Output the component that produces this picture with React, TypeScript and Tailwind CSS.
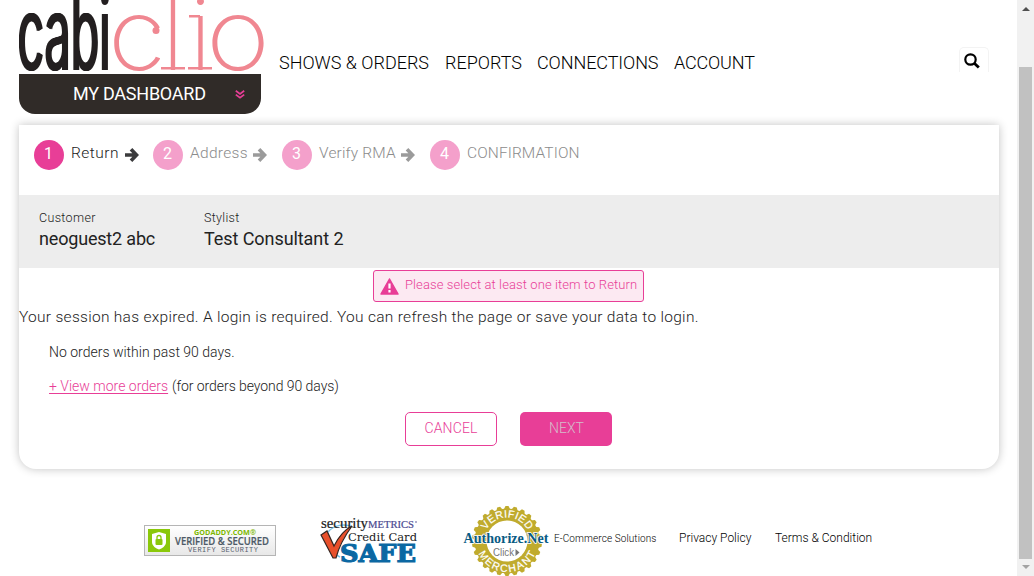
function Arrow({ className }: { className: string }) {
  return (
    <svg viewBox="0 0 14 14" className={`h-[14px] w-[14px] fill-none ${className}`}>
      <path d="M0 7H10.500M6 1.300L11.500 7L6 12.700" stroke="currentColor" strokeWidth="3.600" />
    </svg>
  );
}

function Logo() {
  return (
    <svg viewBox="0 0 250 74" className="block h-[74px] w-[250px] overflow-hidden">
      <text x="-2.500" y="69.500" textLength="93" lengthAdjust="spacingAndGlyphs" fill="#231f20" fontFamily="Inter, sans-serif" fontWeight="400" fontSize="103" className="[filter:drop-shadow(1.2px_0_0_#231f20)_drop-shadow(1px_0_0_#231f20)]">
        cabi
      </text>
      <g fill="#f08791" fontFamily="Inter, sans-serif" fontWeight="200" fontSize="99">
        <text x="89" y="69.500" textLength="58" lengthAdjust="spacingAndGlyphs">c</text>
        <text x="143" y="69.500" textLength="22" lengthAdjust="spacingAndGlyphs">l</text>
        <text x="170.500" y="69.500" textLength="22" lengthAdjust="spacingAndGlyphs">i</text>
        <text x="187" y="69.500" textLength="64" lengthAdjust="spacingAndGlyphs">o</text>
        <rect x="142" y="67" width="24" height="2.500" />
        <rect x="169" y="67" width="24" height="2.500" />
        <rect x="170" y="15" width="11" height="2.500" />
        <circle cx="137" cy="30.500" r="3.500" />
      </g>
    </svg>
  );
}

function Step({ n, label, active, className, labelClass, arrow = true }: { n: number; label: string; active?: boolean; className: string; labelClass: string; arrow?: boolean }) {
  return (
    <div className={`flex shrink-0 items-start ${className}`}>
      <span className={`mt-[15px] flex h-[30px] w-[30px] shrink-0 justify-center rounded-full text-[16px] leading-[27px] font-normal text-white ${active ? "bg-[#e83e97]" : "bg-[#f4a0cb]"}`}>
        <span className="-ml-px">{n}</span>
      </span>
      <span className={`mt-[18px] ml-[7px] text-[15.5px] leading-5 ${labelClass} ${active ? "text-[#222]" : "text-[#8c8c8c]"}`}>{label}</span>
      {arrow && <Arrow className={`mt-[23px] ml-auto ${active ? "text-[#3b3b3d]" : "text-[#9b9b9b]"}`} />}
    </div>
  );
}

function GoDaddySeal() {
  return (
    <div className="flex h-[31px] w-[132px] items-center border border-[#b5b5b5] bg-linear-to-b from-white to-[#e8e8e8] pl-[3px]">
      <svg viewBox="0 0 22 23" className="h-[23px] w-[22px]">
        <rect width="22" height="23" fill="#8ac80a" />
        <path d="M11 3L18 5V13C18 17 14 19.500 11 20.500C8 19.500 4 17 4 13V5Z" fill="#fff" />
        <rect x="7.500" y="10" width="7" height="6" rx="1" fill="#8ac80a" />
        <path d="M9 10V8.500a2 2 0 0 1 4 0V10" fill="none" stroke="#8ac80a" strokeWidth="1.300" />
      </svg>
      <svg viewBox="0 0 104 29" className="h-[29px] w-[104px]">
        <text x="24" y="9.200" textLength="62" lengthAdjust="spacingAndGlyphs" fontFamily="Open Sans" fontWeight="700" fontSize="7" fill="#7cb800">GODADDY.COM®</text>
        <text x="5" y="19" textLength="94" lengthAdjust="spacingAndGlyphs" fontFamily="Open Sans" fontWeight="600" fontSize="11" fill="#4d5a66" stroke="#4d5a66" strokeWidth=".2">VERIFIED &amp; SECURED</text>
        <text x="18" y="26" textLength="70" fontFamily="Liberation Mono" fontSize="7" fill="#56606c">VERIFY SECURITY</text>
      </svg>
    </div>
  );
}

function SecurityMetrics() {
  return (
    <svg viewBox="0 0 100 52" className="h-[52px] w-[100px]">
      <path d="M8 17C14 10 24 8 33 12M5 22C5 31 10 37 20 42" fill="none" stroke="#7cc4e8" strokeWidth="1.500" />
      <g fontFamily="Liberation Serif">
        <text x="1" y="13" textLength="47" lengthAdjust="spacingAndGlyphs" fontSize="15" fill="#222" stroke="#222" strokeWidth=".2">security</text>
        <text x="48" y="13" textLength="46" lengthAdjust="spacingAndGlyphs" fontSize="9.500" fill="#4b4a91" stroke="#4b4a91" strokeWidth=".2">METRICS</text>
      </g>
      <circle cx="96" cy="7" r=".8" fill="#4b4a91" />
      <path d="M1 20L7 16L14 31C19 21 24 15 32 11C24 22 19 31 16 43H13Z" fill="#e8502b" stroke="#342520" strokeWidth="1.200" />
      <text x="28" y="25.500" textLength="69" lengthAdjust="spacingAndGlyphs" fontFamily="DejaVu Serif" fontSize="11.500" fill="#222" stroke="#fff" strokeWidth="1.500" paintOrder="stroke">Credit Card</text>
      <text x="20" y="47" textLength="76" lengthAdjust="spacingAndGlyphs" fontFamily="DejaVu Serif" fontWeight="700" fontSize="24" fill="#0b68a3" stroke="#0b68a3" strokeWidth="1.200">SAFE</text>
    </svg>
  );
}

const teeth = Array.from({ length: 26 }, (_, i) => (i * 360) / 26);

function AuthorizeSeal() {
  return (
    <svg viewBox="0 0 88 72" className="h-[72px] w-[88px]">
      <g fill="#c0ab2d">
        <circle cx="44" cy="37" r="32.500" />
        {teeth.map((a) => (
          <path key={a} d="M40.500 6L42.500 2H45.500L47.500 6Z" transform={`rotate(${a} 44 37)`} />
        ))}
      </g>
      <circle cx="44" cy="37" r="20.500" fill="#fff" />
      <path id="sealTop" d="M20.500 37A23.500 23.500 0 0 1 67.500 37" fill="none" />
      <path id="sealBottom" d="M13 37A31 31 0 0 0 75 37" fill="none" />
      <g fontFamily="Liberation Sans" fontSize="10.500" fill="#fff" stroke="#fff" strokeWidth=".2" textAnchor="middle">
        <text><textPath href="#sealTop" startOffset="50%" textLength="51">VERIFIED</textPath></text>
        <text><textPath href="#sealBottom" startOffset="50%" textLength="72">MERCHANT</textPath></text>
      </g>
      <text x="0.500" y="38.500" textLength="85" lengthAdjust="spacingAndGlyphs" fontFamily="Liberation Serif" fontWeight="700" fontSize="15.500" fill="#085b84" stroke="#fff" strokeWidth="1.600" paintOrder="stroke">Authorize.Net</text>
      <text x="30" y="52" textLength="21" lengthAdjust="spacingAndGlyphs" fontFamily="Liberation Sans" fontSize="10" fill="#777">Click</text>
      <path d="M52.500 45V52L56.500 48.500Z" fill="#777" />
    </svg>
  );
}

export default function App() {
  return (
    <div className="flex h-[576px] w-[1034px] overflow-hidden bg-white font-['Roboto',sans-serif] font-light text-[#222]">
      <main className="flex w-[1017px] shrink-0 flex-col overflow-hidden pl-[19px]">
        <header className="flex h-[125px] shrink-0">
          <div className="w-[260px] shrink-0">
            <Logo />
            <div className="flex h-10 w-[242px] items-start rounded-b-[16px] bg-[#302b28] pt-[9px] pl-[54px] text-[18px] leading-[22px] font-normal tracking-[-0.25px] text-white">
              <span className="w-[162px] whitespace-nowrap">MY DASHBOARD</span>
              <svg viewBox="0 0 10 9" className="mt-[7px] h-[9px] w-[10px] fill-none stroke-[#e83e97] stroke-[1.7]">
                <path d="M.8 .8L5 4L9.200 .8M.8 4.600L5 7.800L9.200 4.600" />
              </svg>
            </div>
          </div>
          <nav className="flex pt-[51px] text-[18px] leading-6 whitespace-nowrap text-black">
            <a className="w-[166px]">SHOWS &amp; ORDERS</a>
            <a className="w-[92px]">REPORTS</a>
            <a className="w-[137px] tracking-[-0.08px]">CONNECTIONS</a>
            <a className="w-[85px] tracking-[-0.15px]">ACCOUNT</a>
          </nav>
          <div className="mt-[47px] ml-[200px] h-[25px] w-[30px] rounded-t-[5px] border border-b-0 border-[#f3f3f3] pt-[5px] pl-[4px]">
            <svg viewBox="0 0 16 16" className="h-4 w-4 fill-none stroke-black stroke-[2.2]">
              <circle cx="6.500" cy="6.500" r="5.200" />
              <path d="M10.300 10.300L14.800 14.600" strokeWidth="2.800" />
            </svg>
          </div>
        </header>

        <section className="flex h-[344px] w-[980px] shrink-0 flex-col rounded-b-[17px] bg-white shadow-[0_0_10px_rgba(0,0,0,0.24)]">
          <div className="flex h-[70px] shrink-0 pl-[15px] whitespace-nowrap">
            <Step n={1} label="Return" active className="mr-[14px] w-[105px]" labelClass="tracking-[0.5px]" />
            <Step n={2} label="Address" className="mr-[15px] w-[114px]" labelClass="tracking-[0.3px]" />
            <Step n={3} label="Verify RMA" className="mr-[15px] w-[133px]" labelClass="tracking-[0.15px]" />
            <Step n={4} label="CONFIRMATION" arrow={false} className="w-[160px]" labelClass="tracking-[0.1px]" />
          </div>
          <div className="flex h-[73px] shrink-0 bg-[#ededed] pt-[15px] pl-5 whitespace-nowrap">
            <div className="w-[165px]">
              <div className="text-[12.500px] leading-4 tracking-[0.35px]">Customer</div>
              <div className="mt-px text-[18px] leading-6 font-normal tracking-[-0.18px]">neoguest2 abc</div>
            </div>
            <div>
              <div className="text-[12.500px] leading-4 tracking-[0.3px]">Stylist</div>
              <div className="mt-px text-[18px] leading-6 font-normal tracking-[-0.07px]">Test Consultant 2</div>
            </div>
          </div>
          <div className="mt-[2px] ml-[354px] flex h-8 w-[271px] shrink-0 rounded-[3px] border border-[#e83e97] bg-[#fce9f2] pl-[6px] whitespace-nowrap text-[#e83e97]">
            <svg viewBox="0 0 19 17" className="mt-[7px] h-[17px] w-[19px]">
              <path d="M9.500 1L18 16H1Z" fill="currentColor" stroke="currentColor" strokeWidth="1.500" strokeLinejoin="round" />
              <path d="M9.500 5.500V10.500M9.500 12V14.500" stroke="#fff" strokeWidth="2.200" />
            </svg>
            <span className="ml-[6px] text-[13px] leading-[28px] tracking-[0.1px]">Please select at least one item to Return</span>
          </div>
          <p className="mt-[5px] text-[15.500px] leading-5 tracking-[0.29px] whitespace-nowrap">Your session has expired. A login is required. You can refresh the page or save your data to login.</p>
          <p className="mt-[15px] ml-[30px] text-[14px] leading-5 whitespace-nowrap">No orders within past 90 days.</p>
          <div className="mt-[14px] ml-[30px] flex text-[14px] leading-5 whitespace-nowrap">
            <a className="w-[123px] text-[#e83e97] underline underline-offset-2">+ View more orders</a>
            <span className="tracking-[-0.06px]">(for orders beyond 90 days)</span>
          </div>
          <div className="mt-4 ml-[386px] flex gap-[23px] text-[14px] leading-[30px]">
            <button className="h-[34px] w-[92px] rounded-[5px] border border-[#e83e97] pb-[2px] tracking-[0.15px] text-[#e83e97]">CANCEL</button>
            <button className="h-[34px] w-[92px] rounded-[5px] bg-[#e83e97] pb-[2px] pl-px text-[#d5bcca]">NEXT</button>
          </div>
        </section>

        <footer className="flex h-[107px] shrink-0 text-[12px] leading-4 whitespace-nowrap text-black">
          <div className="ml-[125px] w-[176px] pt-[56px]"><GoDaddySeal /></div>
          <div className="w-[143px] pt-[46px]"><SecurityMetrics /></div>
          <div className="w-[91px] pt-[35px]"><AuthorizeSeal /></div>
          <span className="w-[125px] pt-[62px] text-[10px] tracking-[0.1px]">E-Commerce Solutions</span>
          <a className="w-[96px] pt-[61px]">Privacy Policy</a>
          <a className="pt-[61px]">Terms &amp; Condition</a>
        </footer>
      </main>
      <aside className="flex w-[17px] shrink-0 flex-col items-center bg-[#f1f1f1]">
        <div className="mt-[7px] h-0 w-0 border-x-4 border-b-4 border-x-transparent border-b-[#505050]" />
        <div className="mt-[56px] h-[492px] w-[13px] bg-[#c1c1c1]" />
        <div className="mt-[6px] h-0 w-0 border-x-4 border-t-4 border-x-transparent border-t-[#a3a3a3]" />
      </aside>
    </div>
  );
}
